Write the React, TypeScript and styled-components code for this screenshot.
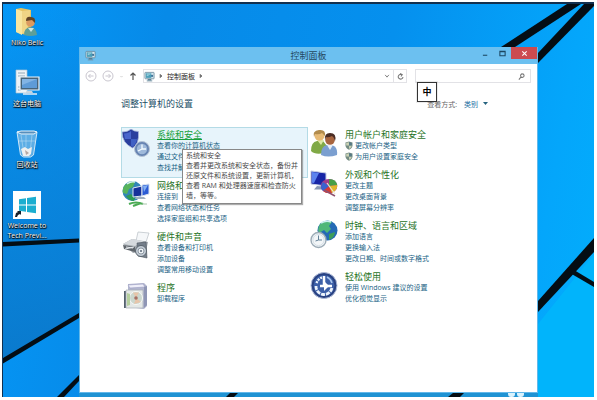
import React from "react";
import styled, { createGlobalStyle } from "styled-components";

const GlobalStyle = createGlobalStyle`
  * { box-sizing: border-box; }
  body {
    margin: 0;
    background: #fff;
    font-family: "Open Sans", "Noto Sans CJK SC", sans-serif;
    font-size: 7px;
    line-height: 11px;
  }
  button, input, select {
    font: inherit;
    color: inherit;
    border: 0;
    padding: 0;
    margin: 0;
    background: none;
  }
  svg { display: block; flex: none; }
  h1, h2, p, ul { margin: 0; padding: 0; font-weight: 400; }
`;

const Page = styled.div`
  min-height: 100vh;
  padding: 2px 3px 3px 2px;
  display: flex;
`;

const Desktop = styled.main`
  position: relative;
  flex: 1;
  display: flex;
  overflow: hidden;
  border-top: 2px solid #12304f;
  border-left: 1px solid #12304f;
  background: linear-gradient(100deg, #0498f8 0%, #078ae8 25%, #0590ee 60%, #04a6fb 88%, #02aefc 100%);
`;

const Wallpaper = styled.svg`
  position: absolute;
  inset: 0;
  width: 100%;
  height: 100%;
`;

const Shortcuts = styled.nav`
  position: relative;
  width: 76px;
  padding-top: 4px;
  display: flex;
  flex-direction: column;
  gap: 21px;
`;

const Shortcut = styled.button`
  width: 48px;
  display: flex;
  flex-direction: column;
  align-items: center;
  gap: 2px;
  color: #fff;
  line-height: 10px;
  text-shadow: 0 0 1px #000, 0 1px 1px #000, 1px 1px 1px #012;
`;

const Window = styled.section`
  position: relative;
  flex: 1;
  min-width: 0;
  margin: 43px 56px 4px 0;
  display: flex;
  flex-direction: column;
  background: #fff;
  border: 1px solid #62b8ea;
  border-top: 0;
`;

const TitleBar = styled.header`
  height: 17px;
  display: grid;
  grid-template-columns: 1fr auto 1fr;
  align-items: center;
  background: #6cc0f0;
`;

const TitleIcon = styled.span`
  padding-left: 5px;
`;

const Title = styled.h1`
  font-size: 9px;
  line-height: 17px;
  color: #24485e;
`;

const Captions = styled.div`
  align-self: start;
  justify-self: end;
  display: flex;
  gap: 1px;
`;

const Caption = styled.button<{ $close?: boolean }>`
  width: ${(p) => (p.$close ? 26 : 16)}px;
  height: 12px;
  display: grid;
  place-items: center;
  background: ${(p) => (p.$close ? "#cc4b50" : "transparent")};
`;

const Toolbar = styled.div`
  display: flex;
  align-items: center;
  padding: 5px 6px 5px 5px;
  gap: 8px;
`;

const NavButtons = styled.div`
  display: flex;
  align-items: center;
  gap: 5px;
  width: 50px;
`;

const IconButton = styled.button`
  display: grid;
  place-items: center;
`;

const Address = styled.div`
  flex: 1;
  height: 14px;
  display: flex;
  align-items: center;
  gap: 3px;
  border: 1px solid #e2e2e6;
  color: #222;
`;

const AddressEnd = styled.div`
  margin-left: auto;
  height: 100%;
  display: flex;
  align-items: center;
`;

const AddressButton = styled(IconButton)<{ $divided?: boolean }>`
  width: 13px;
  height: 100%;
  border-left: ${(p) => (p.$divided ? "1px solid #e2e2e6" : "0")};
`;

const Search = styled.label`
  position: relative;
  width: 26%;
  height: 14px;
  display: flex;
  align-items: center;
  padding-right: 5px;
  border: 1px solid #e2e2e6;
`;

const SearchInput = styled.input`
  flex: 1;
  min-width: 0;
  height: 100%;
  outline: 0;
  padding: 0 3px;
`;

const ImeBadge = styled.span`
  position: absolute;
  top: 100%;
  left: 1px;
  width: 20px;
  height: 20px;
  border: 1px solid #333;
  outline: 1px solid #9993;
  background: #fff;
  color: #000;
  font-size: 9px;
  font-weight: 700;
  line-height: 18px;
  text-align: center;
`;

const Content = styled.div`
  padding: 10px 41px 20px;
`;

const ContentHead = styled.div`
  display: flex;
  align-items: center;
  justify-content: space-between;
  height: 12px;
  margin-bottom: 17px;
  padding-right: 8px;
`;

const PageHeading = styled.h2`
  font-size: 9px;
  line-height: 12px;
  color: #224e66;
`;

const ViewBy = styled.label`
  display: flex;
  align-items: center;
  color: #666;
`;

const ViewSelect = styled.select`
  appearance: none;
  width: 15px;
  margin: 0 4px 0 7px;
  color: #1a6f9f;
  outline: 0;
`;

const Columns = styled.div`
  display: grid;
  grid-template-columns: 1fr 1fr;
  gap: 1px;
  align-items: start;
`;

const Category = styled.section<{ $active?: boolean }>`
  position: relative;
  display: flex;
  gap: 7px;
  padding: 1px 0 4px;
  border: 1px solid ${(p) => (p.$active ? "#b4dbe6" : "transparent")};
  background: ${(p) => (p.$active ? "#e7f4fb" : "transparent")};
`;

const CategoryLinks = styled.div`
  display: flex;
  flex-direction: column;
  align-items: flex-start;
  white-space: nowrap;
`;

const CategoryTitle = styled.a<{ $active?: boolean }>`
  font-size: 9px;
  line-height: 11px;
  color: ${(p) => (p.$active ? "#18a03c" : "#1f7326")};
  text-decoration: ${(p) => (p.$active ? "underline" : "none")};
`;

const TaskLink = styled.a`
  display: flex;
  align-items: center;
  gap: 2px;
  color: #1a6385;
  text-decoration: none;
`;

const Tooltip = styled.div`
  position: absolute;
  z-index: 2;
  top: 21px;
  left: 60px;
  width: 120px;
  padding: 1px 0 2px 3px;
  border: 1px solid #888;
  box-shadow: 1px 1px 1px #6668;
  background: #fff;
  color: #4a4a4a;
  line-height: 10px;
  white-space: nowrap;
`;

const PcGlyph = ({ size = 11 }: { size?: number }) => (
  <svg width={size} height={size} viewBox="0 0 12 12">
    <rect x="1" y="1.5" width="10" height="7" rx=".6" fill="#d7e6ee" stroke="#5a7f93" strokeWidth=".8" />
    <rect x="2" y="2.5" width="6" height="5" fill="#4b9fb8" />
    <path d="M3 3.5h4M3 5h2" stroke="#c8eef5" strokeWidth=".7" />
    <circle cx="8.8" cy="5.4" r="1.2" fill="#3b7298" />
    <path d="M4 8.8h4v1.6H4z" fill="#547c91" />
    <path d="M3 10.8h6" stroke="#6c8fa1" />
  </svg>
);

const Uac = () => (
  <svg width="8" height="9" viewBox="0 0 8 9">
    <path d="M4 .4 7.5 1.6v2.6C7.5 6.5 6 8 4 8.7 2 8 .5 6.5.5 4.2V1.6z" fill="#748b83" />
    <path d="M4 1.2v3.4H1.2V2.1zM4 4.6h2.8C6.600 6.200 5.600 7.300 4 8z" fill="#c9d1b4" />
    <path d="M4 1.200 6.800 2.100v2.500H4z" fill="#567a86" />
  </svg>
);

const SecurityIcon = () => (
  <svg width="28" height="28" viewBox="0 0 28 28">
    <path d="M0 3Q6 3 9 0q3 2.500 7.500 2.500 1 13-6 16.500Q0 14 0 3z" fill="#2a3f9e" stroke="#a9b8dc" strokeWidth=".8" />
    <path d="M2 4.500Q7 4 9 2v8H2.800z" fill="#4a66cc" />
    <path d="M9 10h6q-1 5.500-4.500 7.700-1-.5-1.500-1z" fill="#4060c4" />
    <circle cx="20" cy="20" r="7.500" fill="#6784b2" stroke="#b5c3d6" />
    <circle cx="20" cy="20" r="5.200" fill="#9fb9da" />
    <path d="M20 20v-4.500M20 20h4M16 22l4-2" stroke="#f5fbff" strokeWidth="1.300" />
  </svg>
);

const NetworkIcon = () => (
  <svg width="28" height="28" viewBox="0 0 28 28">
    <circle cx="10.500" cy="11" r="10" fill="#3185b7" />
    <path d="M3 5q5-5 10-3l-2 5-4 2-2 5-4-1q-1-5 2-8z" fill="#56b35c" />
    <path d="M4 16l5-2 4 4-1 3q-5 0-8-5z" fill="#2d9a55" />
    <path d="M5 4q4-3 8-2" stroke="#d8f3ec" strokeWidth="1.500" fill="none" />
    <path d="M11 8l9-2v10l-9 1z" fill="#16309a" stroke="#dce6f2" />
    <path d="M20 5l7-1v10l-7 2z" fill="#2b5bd4" stroke="#dce6f2" />
    <path d="M21 6l5-1-4 7z" fill="#83b0f2" />
    <path d="M14 17h8l2 2H13z" fill="#9fb0bf" />
    <path d="M7 24q7-3 14 0M11 26l8-3" stroke="#4cab55" strokeWidth="2.200" fill="none" />
    <path d="M20 24h5" stroke="#a8c8ac" />
  </svg>
);

const HardwareIcon = () => (
  <svg width="28" height="28" viewBox="0 0 28 28">
    <path d="M16 1l11 1-3 9-10-1z" fill="#f5f7f9" stroke="#b8bec4" strokeWidth=".7" />
    <path d="M1 13L10 8l16 3-2 9-13 2z" fill="#a2a8ae" />
    <path d="M1 13l9-5 12 2-9 5z" fill="#d6dade" />
    <path d="M1 14l12 2v5L2 18z" fill="#60666c" />
    <path d="M3 18l9-2M4 16l7 1" stroke="#e6eaee" />
    <path d="M15 12l9-1 1 16-9-2z" fill="#747e8a" stroke="#4d5660" strokeWidth=".6" />
    <circle cx="19" cy="20" r="5.500" fill="#c3ccd5" stroke="#59636d" />
    <circle cx="19" cy="20" r="3" fill="#eff3f6" stroke="#8d98a3" />
    <circle cx="19" cy="20" r="1.100" fill="#647180" />
  </svg>
);

const ProgramsIcon = () => (
  <svg width="28" height="28" viewBox="0 0 28 28">
    <path d="M6 2l16-1 3 3v20l-3 3L6 25z" fill="#b1b5ce" />
    <path d="M6 3l15-1 2 3-15 1z" fill="#efeff9" stroke="#9c9dc3" strokeWidth=".6" />
    <path d="M22 5l3-1v19l-3 3z" fill="#8f96b5" />
    <path d="M4 8h17v18H4z" fill="#e4e8e6" stroke="#a7adb5" strokeWidth=".7" />
    <path d="M2 9h1.800v17H2z" fill="#54616e" />
    <circle cx="14" cy="16" r="6.500" fill="#cbd7ce" stroke="#f7f9f7" />
    <path d="M14 16l-3-5.500 6 0zM14 16l5 4-7 2z" fill="#e7c5aa" />
    <circle cx="14" cy="16" r="1.800" fill="#a77065" />
    <path d="M5 11l3 1v11l-3 1z" fill="#b5cf9e" />
  </svg>
);

const UsersIcon = () => (
  <svg width="28" height="28" viewBox="0 0 28 28">
    <path d="M1 22q0-9 6-10h6l4 5-3 7Q5 26 1 22z" fill="#80a946" />
    <path d="M7 11l4 5 3-5z" fill="#dce8a4" />
    <circle cx="9.500" cy="6.800" r="5" fill="#e7ba75" />
    <path d="M4 8Q2 2 9 1q7-1 6 6-2-2-3-3-3 2-7 1z" fill="#b28b4c" />
    <path d="M11 26q0-9 6-10h5q6 2 5 10-9 3-16 0z" fill="#7b9fd0" />
    <path d="M17 16l3 5 3-5z" fill="#e7eff8" />
    <circle cx="20" cy="11" r="4.800" fill="#a8653f" />
    <path d="M15 11q-1-7 5-7 7 0 5 8-1-4-3-5-4 2-6 1z" fill="#4a2c23" />
  </svg>
);

const AppearanceIcon = () => (
  <svg width="28" height="28" viewBox="0 0 28 28">
    <path d="M1 2l15 2v13L1 15z" fill="#1725a6" stroke="#c5cee4" />
    <path d="M2 3l7 1-5 10-2-.3z" fill="#5c82ee" />
    <path d="M7 17l5 .6 3 3H4z" fill="#8998b4" />
    <ellipse cx="19" cy="17" rx="8.300" ry="7" fill="#a03d8b" />
    <path d="M19 17V10q7 0 8.300 6z" fill="#46a047" />
    <path d="M19 17l8.300-1q0 6-6 8z" fill="#e0b72b" />
    <path d="M19 17l3 7q-6 1-9-2z" fill="#d53c35" />
    <path d="M19 17l-6 5q-4-4 0-9z" fill="#3a63cf" />
    <path d="M17 14l8 11" stroke="#eee5d5" strokeWidth="1.200" />
    <path d="M14 21l11 6" stroke="#8f5270" strokeWidth="1.500" />
  </svg>
);

const ClockIcon = () => (
  <svg width="28" height="29" viewBox="0 0 28 29">
    <circle cx="17.500" cy="10.500" r="10" fill="#246ab5" />
    <path d="M10 4q6-5 12-2l-3 4 2 3-4 4-3-3-5 3q-2-4 1-9z" fill="#4fb779" />
    <path d="M19 14l6-2q0 5-6 8z" fill="#3c9d5a" />
    <path d="M11 3q5-3 10-1" stroke="#ccf0f0" strokeWidth="1.500" fill="none" />
    <circle cx="8.500" cy="20" r="7.500" fill="#f3f6f8" stroke="#9cabb6" strokeWidth="1.400" />
    <circle cx="8.500" cy="20" r="5.600" fill="none" stroke="#d4dfe7" />
    <path d="M8.500 15.500V20H12M8.500 20l-3 1" stroke="#64839a" fill="none" />
  </svg>
);

const EaseIcon = () => (
  <svg width="28" height="29" viewBox="0 0 28 29">
    <circle cx="14" cy="14.500" r="13" fill="#294282" stroke="#b1bdd9" />
    <circle cx="14" cy="14.500" r="10.500" fill="#3d60a8" />
    <path d="M12 6.500a8.300 8.300 0 0 0-5.500 6" stroke="#edf4fc" strokeWidth="2.400" strokeDasharray="2 1" fill="none" />
    <path d="M6 15a8 8 0 0 0 16 1" stroke="#edf4fc" strokeWidth="2.800" strokeDasharray="4 1" fill="none" />
    <path d="M14 5v10h8M10 15h7" stroke="#fff" strokeWidth="2.500" fill="none" />
    <path d="M14 10l5 5-5 5z" fill="#fff" />
    <path d="M17 6q4 2 5 6" stroke="#a9c6ee" strokeWidth="1.500" fill="none" />
  </svg>
);

const FolderIcon = () => (
  <svg width="28" height="28" viewBox="0 0 28 28">
    <path d="M3 1l5-1 10 2v22l-5 3-10-3z" fill="#e5c261" />
    <path d="M3 1l6 2v24l-6-3z" fill="#f8e6a0" />
    <path d="M9 3l8-1v10l-4 12-4 2z" fill="#f0d585" />
    <path d="M11 27q0-7 6-8 6 0 7 8-7 2-13 0z" fill="#5e9f98" />
    <circle cx="17.500" cy="14.500" r="4.300" fill="#dc9a60" />
    <path d="M13 13q0-5 5-4 5 0 4 6l-3-3z" fill="#614426" />
    <path d="M15 20l3 4 3-4z" fill="#cee8e4" />
  </svg>
);

const ComputerIcon = () => (
  <svg width="28" height="28" viewBox="0 0 28 28">
    <path d="M3 1h11v23H3z" fill="#edf3f7" stroke="#a8c2d2" strokeWidth=".7" />
    <path d="M5 4h7M5 7h7M5 18h3M5 21h3" stroke="#92a9b9" />
    <path d="M7 8h19v13H7z" fill="#46647a" stroke="#edf6fc" strokeWidth="1.200" />
    <path d="M9 10h15v9H9z" fill="#5e9bd7" />
    <path d="M9 10h15L9 16z" fill="#82b4e4" />
    <path d="M14 22h5l1 2h-7z" fill="#c6d4df" />
    <path d="M10 25h14" stroke="#e7eef4" strokeWidth="1.500" />
  </svg>
);

const BinIcon = () => (
  <svg width="28" height="28" viewBox="0 0 28 28">
    <path d="M4 2l20 0-3.500 23-3 2h-7l-3-2z" fill="#8bc1e6" fillOpacity=".65" stroke="#cfe7f7" />
    <path d="M4 2l4-1h13l3 1-3 2H8z" fill="#568fbd" stroke="#e7f4fc" />
    <path d="M8 5l3 19M19 5l-2 18M13 5v12M5 11h17" stroke="#e2f2fb" strokeOpacity=".4" />
    <path d="M8 19l4-2 3 2 4-2-1 7-2 2h-6z" fill="#eef0f0" />
    <path d="M12 20l4 3-3 2z" fill="#b6a7a2" />
  </svg>
);

const WelcomeIcon = () => (
  <svg width="28" height="28" viewBox="0 0 28 28">
    <path d="M0 0h28v28H0z" fill="#fff" />
    <path d="M6 8.200l7-1v6.300H6zM14 7l9-1.300v7.800h-9zM6 14.500h7v6.300l-7-1zM14 14.500h9v7.800L14 21z" fill="#1caed0" />
    <path d="M2 26l1-4 2-1-1-1h4v4l-1-1-2 1-1 2z" fill="#16202c" />
  </svg>
);

type CategoryData = {
  title: string;
  icon: React.ReactNode;
  links: string[];
  shield?: boolean;
  tip?: string[];
};

const left: CategoryData[] = [
  {
    title: "系统和安全",
    icon: <SecurityIcon />,
    links: ["查看你的计算机状态", "通过文件", "查找并解"],
    tip: [
      "系统和安全",
      "查看并更改系统和安全状态，备份并",
      "还原文件和系统设置，更新计算机，",
      "查看 RAM 和处理器速度和检查防火",
      "墙，等等。",
    ],
  },
  { title: "网络和", icon: <NetworkIcon />, links: ["连接到", "查看网络状态和任务", "选择家庭组和共享选项"] },
  { title: "硬件和声音", icon: <HardwareIcon />, links: ["查看设备和打印机", "添加设备", "调整常用移动设置"] },
  { title: "程序", icon: <ProgramsIcon />, links: ["卸载程序"] },
];

const right: CategoryData[] = [
  { title: "用户帐户和家庭安全", icon: <UsersIcon />, links: ["更改帐户类型", "为用户设置家庭安全"], shield: true },
  { title: "外观和个性化", icon: <AppearanceIcon />, links: ["更改主题", "更改桌面背景", "调整屏幕分辨率"] },
  { title: "时钟、语言和区域", icon: <ClockIcon />, links: ["添加语言", "更换输入法", "更改日期、时间或数字格式"] },
  { title: "轻松使用", icon: <EaseIcon />, links: ["使用 Windows 建议的设置", "优化视觉显示"] },
];

const CategoryView = ({ data }: { data: CategoryData }) => (
  <Category $active={!!data.tip}>
    {data.icon}
    <CategoryLinks>
      <CategoryTitle href="#" $active={!!data.tip}>{data.title}</CategoryTitle>
      {data.links.map((text) => (
        <TaskLink href="#" key={text}>
          {data.shield && <Uac />}
          {text}
        </TaskLink>
      ))}
    </CategoryLinks>
    {data.tip && (
      <Tooltip role="tooltip">
        {data.tip.map((line) => <p key={line}>{line}</p>)}
      </Tooltip>
    )}
  </Category>
);

const Arrow = ({ d, size = 7, color = "#777" }: { d: string; size?: number; color?: string }) => (
  <svg width={size} height={size} viewBox="0 0 8 8" fill="none" stroke={color} strokeWidth="1.200">
    <path d={d} />
  </svg>
);

const RoundArrow = ({ forward }: { forward?: boolean }) => (
  <svg width="12" height="12" viewBox="0 0 12 12" fill="none" stroke="#c3bfca" strokeWidth=".9">
    <circle cx="6" cy="6" r="5" />
    <path d={forward ? "M3.500 6h5M6.500 4l2 2-2 2" : "M8.500 6h-5M5.500 4l-2 2 2 2"} />
  </svg>
);

export default function App() {
  return (
    <Page>
      <GlobalStyle />
      <Desktop>
        <Wallpaper viewBox="0 0 591 393" preserveAspectRatio="none" aria-hidden="true">
          <defs>
            <linearGradient id="shade" x1="0" y1="0" x2="0" y2="1">
              <stop offset="0" stopColor="#0b8ce6" stopOpacity="0" />
              <stop offset=".3" stopColor="#0b84dc" stopOpacity=".6" />
              <stop offset="1" stopColor="#0b74c4" stopOpacity=".8" />
            </linearGradient>
          </defs>
          <path d="M0 0H76V310L0 357z" fill="url(#shade)" />
          <path d="M535 320L591 250V393H535z" fill="#01b4fb" />
          <path d="M76 389H535V393H76z" fill="#1f93d3" />
          <g fill="#040d14">
            <path d="M564 0h14L512 43h-14z" />
            <path d="M581 0h10v2L535 59V49z" />
            <path d="M0 238L76 234.500v4L0 242.500z" />
            <path d="M0 354L76 309v5L0 359.500z" />
            <path d="M54 393L76 371v6L61 393z" />
            <path d="M223 393l4-4h8l-4 4z" />
            <path d="M445 393l5-4h11l-4 4z" />
            <path d="M535 297L591 234v14L535 308z" />
            <path d="M571 266l20 12v5L567 269z" />
          </g>
          <g fill="#d9f2fd">
            <rect x="505" y="386" width="7" height="7" rx="3" />
            <rect x="514" y="386" width="7" height="7" rx="3" />
          </g>
        </Wallpaper>

        <Shortcuts aria-label="桌面">
          <Shortcut><FolderIcon />Niko Belic</Shortcut>
          <Shortcut><ComputerIcon />这台电脑</Shortcut>
          <Shortcut><BinIcon />回收站</Shortcut>
          <Shortcut><WelcomeIcon />Welcome to Tech Previ...</Shortcut>
        </Shortcuts>

        <Window>
          <TitleBar>
            <TitleIcon><PcGlyph /></TitleIcon>
            <Title>控制面板</Title>
            <Captions>
              <Caption aria-label="最小化"><Arrow d="M1 6h5" color="#1c4660" /></Caption>
              <Caption aria-label="最大化"><Arrow d="M1 1.500h6v5H1zM1 2h6" color="#1c4660" /></Caption>
              <Caption aria-label="关闭" $close><Arrow d="M1.500 1.500l5 5M6.500 1.500l-5 5" color="#fff" /></Caption>
            </Captions>
          </TitleBar>

          <Toolbar>
            <NavButtons>
              <IconButton aria-label="后退"><RoundArrow /></IconButton>
              <IconButton aria-label="前进"><RoundArrow forward /></IconButton>
              <IconButton aria-label="历史记录"><Arrow d="M2.500 3.500L4 5l1.500-1.500" size={5} color="#bbb" /></IconButton>
              <IconButton aria-label="向上"><Arrow d="M4 8V1M1.500 3.500L4 1l2.500 2.500" size={8} color="#555" /></IconButton>
            </NavButtons>
            <Address>
              <PcGlyph size={11} />
              <Arrow d="M3 2l2 2-2 2z" size={6} color="#444" />
              <button>控制面板</button>
              <Arrow d="M3 2l2 2-2 2z" size={6} color="#444" />
              <AddressEnd>
                <AddressButton aria-label="展开"><Arrow d="M1.500 2.500L4 5.500l2.500-3" size={6} /></AddressButton>
                <AddressButton aria-label="刷新" $divided><Arrow d="M5.500 2A2.700 2.700 0 1 0 6.800 4.500M3.500.5L6 2 4.500 4" /></AddressButton>
              </AddressEnd>
            </Address>
            <Search>
              <SearchInput type="search" aria-label="搜索控制面板" />
              <Arrow d="M5 1a2 2 0 1 1-.1 0M3.500 4.500L1 7.500" />
              <ImeBadge>中</ImeBadge>
            </Search>
          </Toolbar>

          <Content>
            <ContentHead>
              <PageHeading>调整计算机的设置</PageHeading>
              <ViewBy>
                查看方式:
                <ViewSelect><option>类别</option></ViewSelect>
                <svg width="5" height="4" viewBox="0 0 5 4"><path d="M0 0h5L2.500 3z" fill="#25637f" /></svg>
              </ViewBy>
            </ContentHead>
            <Columns>
              <div>{left.map((c) => <CategoryView key={c.title} data={c} />)}</div>
              <div>{right.map((c) => <CategoryView key={c.title} data={c} />)}</div>
            </Columns>
          </Content>
        </Window>
      </Desktop>
    </Page>
  );
}
